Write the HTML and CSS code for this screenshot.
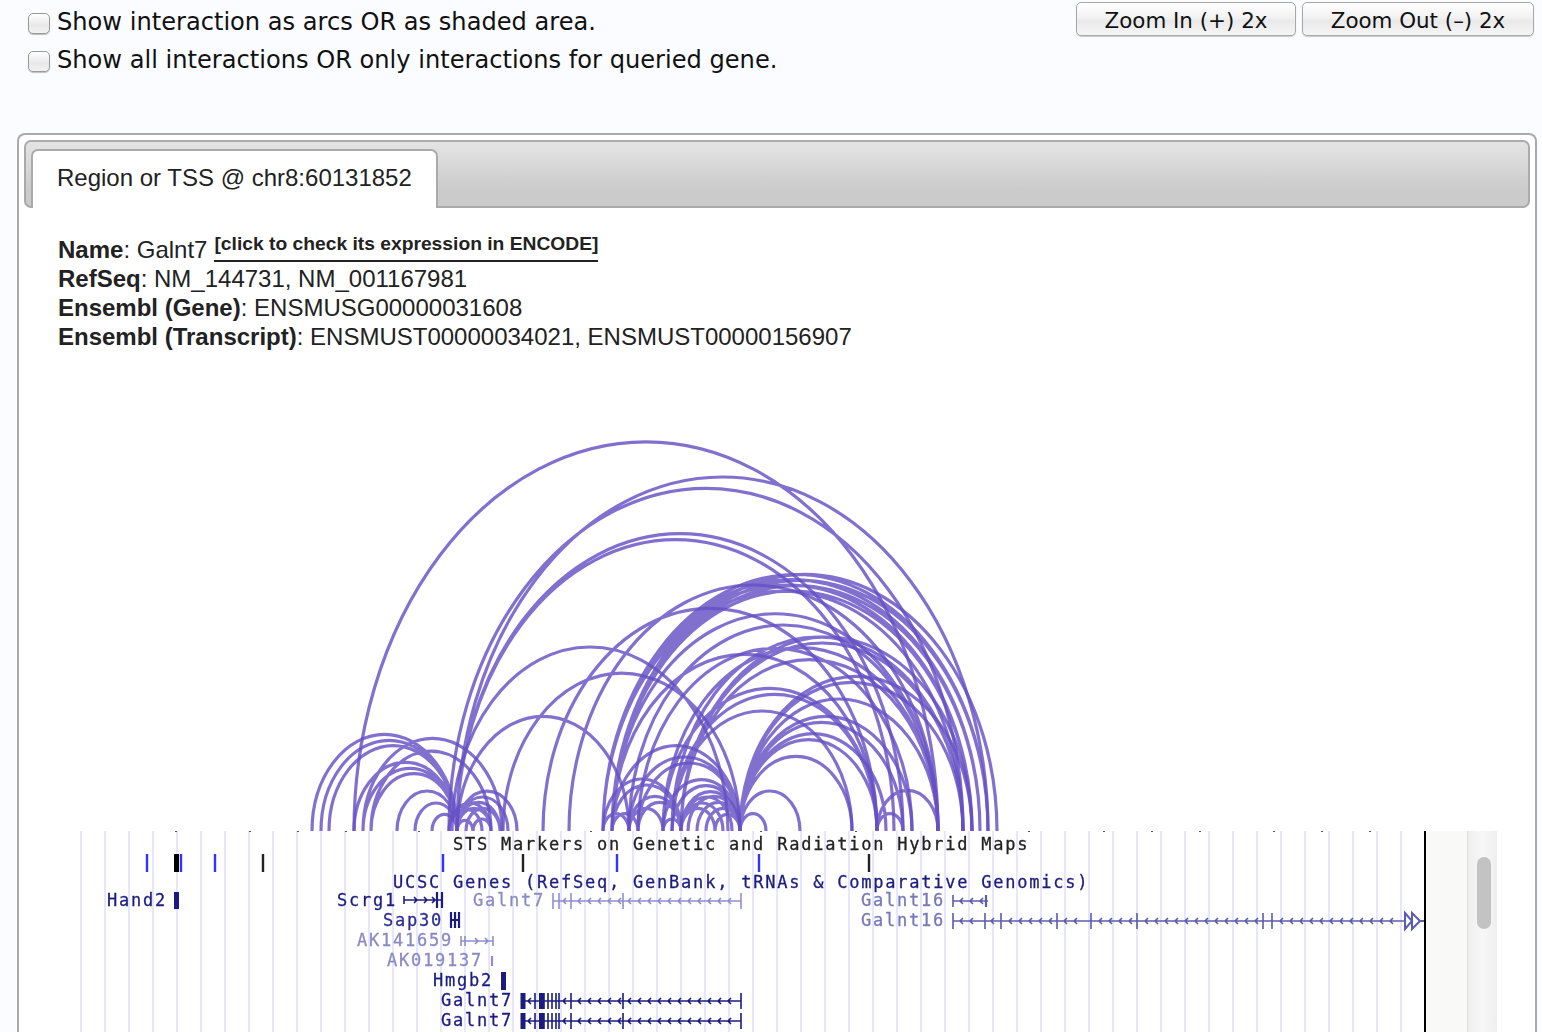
FILE: index.html
```html
<!DOCTYPE html>
<html lang="en">
<head>
<meta charset="utf-8">
<title>Region or TSS</title>
<link rel="stylesheet" href="styles.css">
</head>
<body>
<header class="controls">
  <div class="options">
    <label class="option"><input type="checkbox" class="check"><span>Show interaction as arcs OR as shaded area.</span></label>
    <label class="option"><input type="checkbox" class="check"><span>Show all interactions OR only interactions for queried gene.</span></label>
  </div>
  <div class="zooms">
    <button class="btn btn-in">Zoom In (+) 2x</button>
    <button class="btn btn-out">Zoom Out (–) 2x</button>
  </div>
</header>
<main class="panel">
  <div class="tabbar"><div class="tab">Region or TSS @ chr8:60131852</div></div>
  <section class="info">
    <div class="line line-name"><span><b>Name</b>: Galnt7</span><a class="encode">[click to check its expression in ENCODE]</a></div>
    <div class="line"><b>RefSeq</b>: NM_144731, NM_001167981</div>
    <div class="line"><b>Ensembl (Gene)</b>: ENSMUSG00000031608</div>
    <div class="line"><b>Ensembl (Transcript)</b>: ENSMUST00000034021, ENSMUST00000156907</div>
  </section>
  <svg class="arcs" viewBox="24 430 1000 401" width="1000" height="401">
    <g class="arc">
      <path d="M354 831A3 4 0 0 1 938 831M457 831A3 4 0 0 1 988 831M449 831A3 4 0 0 1 963 831M457 831A3 4 0 0 1 903 831M457 831A3 4 0 0 1 894 831"/>
      <path d="M312 831A3 4 0 0 1 457 831M321 831A3 4 0 0 1 457 831M329 831A3 4 0 0 1 457 831M363 831A3 4 0 0 1 502 831M371 831A3 4 0 0 1 491 831M354 831A3 4 0 0 1 457 831M363 831A3 4 0 0 1 457 831M371 831A3 4 0 0 1 457 831M397 831A3 4 0 0 1 457 831M415 831A3 4 0 0 1 457 831M432 831A3 4 0 0 1 457 831"/>
      <path d="M457 831A3 4 0 0 1 517 831M457 831A3 4 0 0 1 508 831M457 831A3 4 0 0 1 500 831M457 831A3 4 0 0 1 491 831M449 831A3 4 0 0 1 491 831M449 831A3 4 0 0 1 482 831M466 831A3 4 0 0 1 500 831M473 831A3 4 0 0 1 491 831M457 831A3 4 0 0 1 473 831"/>
      <path d="M452 831A3 4 0 0 1 728 831M503 831A3 4 0 0 1 740 831M457 831A3 4 0 0 1 629 831M543 831A3 4 0 0 1 877 831M569 831A3 4 0 0 1 938 831"/>
      <path d="M603 831A3 4 0 0 1 988 831M603 831A3 4 0 0 1 980 831M612 831A3 4 0 0 1 988 831M612 831A3 4 0 0 1 997 831M612 831A3 4 0 0 1 980 831M603 831A3 4 0 0 1 972 831M612 831A3 4 0 0 1 972 831M603 831A3 4 0 0 1 963 831M612 831A3 4 0 0 1 938 831M629 831A3 4 0 0 1 938 831M612 831A3 4 0 0 1 877 831"/>
      <path d="M740 831A3 4 0 0 1 852 831M740 831A3 4 0 0 1 877 831M740 831A3 4 0 0 1 886 831M740 831A3 4 0 0 1 903 831M740 831A3 4 0 0 1 912 831M740 831A3 4 0 0 1 938 831M740 831A3 4 0 0 1 963 831M740 831A3 4 0 0 1 972 831M740 831A3 4 0 0 1 766 831M740 831A3 4 0 0 1 800 831M877 831A3 4 0 0 1 938 831M877 831A3 4 0 0 1 903 831"/>
      <path d="M672 831A3 4 0 0 1 877 831M663 831A3 4 0 0 1 877 831M672 831A3 4 0 0 1 852 831M681 831A3 4 0 0 1 938 831M663 831A3 4 0 0 1 938 831M672 831A3 4 0 0 1 963 831M681 831A3 4 0 0 1 963 831M681 831A3 4 0 0 1 972 831M638 831A3 4 0 0 1 912 831"/>
      <path d="M603 831A3 4 0 0 1 681 831M612 831A3 4 0 0 1 681 831M629 831A3 4 0 0 1 681 831M638 831A3 4 0 0 1 681 831M663 831A3 4 0 0 1 681 831M603 831A3 4 0 0 1 629 831M612 831A3 4 0 0 1 638 831M629 831A3 4 0 0 1 663 831M612 831A3 4 0 0 1 740 831M629 831A3 4 0 0 1 740 831M638 831A3 4 0 0 1 740 831M663 831A3 4 0 0 1 740 831M672 831A3 4 0 0 1 740 831"/>
      <path d="M681 831A3 4 0 0 1 740 831M688 831A3 4 0 0 1 740 831M697 831A3 4 0 0 1 740 831M706 831A3 4 0 0 1 740 831M681 831A3 4 0 0 1 732 831M681 831A3 4 0 0 1 723 831M681 831A3 4 0 0 1 715 831M715 831A3 4 0 0 1 740 831"/>
    </g>
  </svg>
  <div class="browser">
    <svg class="tracks" viewBox="80 831 1344 201" width="1344" height="201">
      <g class="guides">
        <path d="M81 831V1032M105 831V1032M129 831V1032M153 831V1032M177 831V1032M201 831V1032M225 831V1032M249 831V1032M273 831V1032M297 831V1032M321 831V1032M345 831V1032M369 831V1032M393 831V1032M417 831V1032M441 831V1032M465 831V1032M489 831V1032M513 831V1032M537 831V1032M561 831V1032M585 831V1032M609 831V1032M633 831V1032M657 831V1032M681 831V1032M705 831V1032M729 831V1032M753 831V1032M777 831V1032M801 831V1032M825 831V1032M849 831V1032M873 831V1032M897 831V1032M921 831V1032M945 831V1032M969 831V1032M993 831V1032M1017 831V1032M1041 831V1032M1065 831V1032M1089 831V1032M1113 831V1032M1137 831V1032M1161 831V1032M1185 831V1032M1209 831V1032M1233 831V1032M1257 831V1032M1281 831V1032M1305 831V1032M1329 831V1032M1353 831V1032M1377 831V1032M1401 831V1032"/>
      </g>
      <path class="dots" d="M175 831h2M249 831h2M297 831h2M345 831h2M418 831h2M590 831h2M760 831h2M855 831h2M1028 831h2M1103 831h2M1151 831h2M1199 831h2M1273 831h2M1321 831h2M1369 831h2"/>
      <path class="sts-blue" d="M147 854V872M181 854V872M215 854V872M443 854V872M617 854V872M759 854V872"/>
      <path class="sts-black" d="M263 854V872M523 854V872M869 854V872"/>
      <path class="sts-thick" d="M176.500 854V872"/>
      <text class="label black" x="453" y="850">STS Markers on Genetic and Radiation Hybrid Maps</text>
      <text class="label navy" x="393" y="888">UCSC Genes (RefSeq, GenBank, tRNAs &amp; Comparative Genomics)</text>

      <text class="label navy" x="107" y="906">Hand2</text>
      <path class="exon navy-s" d="M176.500 892V909"/>
      <text class="label navy" x="337" y="906">Scrg1</text>
      <path class="track navy-s" d="M404 900H442M404 896V904M414 897l3 3l-3 3M424 897l3 3l-3 3M432 897l3 3l-3 3"/>
      <path class="exon-thin navy-s" d="M437 892V908M442 892V908"/>
      <text class="label pale" x="473" y="906">Galnt7</text>
      <path class="track pale-s" d="M553 901H741M553 893V909M559 893V909M571 893V909M623 893V909M741 893V909M566 898l-3 3l3 3M581 898l-3 3l3 3M591 898l-3 3l3 3M601 898l-3 3l3 3M611 898l-3 3l3 3M621 898l-3 3l3 3M631 898l-3 3l3 3M641 898l-3 3l3 3M651 898l-3 3l3 3M661 898l-3 3l3 3M671 898l-3 3l3 3M681 898l-3 3l3 3M691 898l-3 3l3 3M701 898l-3 3l3 3M711 898l-3 3l3 3M721 898l-3 3l3 3M731 898l-3 3l3 3"/>
      <text class="label mid" x="861" y="906">Galnt16</text>
      <path class="track mid-s" d="M953 901H988M953 895V907M963 898l-3 3l3 3M973 898l-3 3l3 3M983 898l-3 3l3 3"/>
      <path class="exon-thin mid-s" d="M986 895V907"/>

      <text class="label navy2" x="383" y="926">Sap30</text>
      <path class="exon-thin navy-s" d="M451 912V928M455 912V928M459 912V928M451 920H459"/>
      <text class="label mid" x="861" y="926">Galnt16</text>
      <path class="track mid-s" d="M953 921H1404M953 913V929M985 913V929M1001 913V929M1057 913V929M1091 913V929M1137 913V929M1263 913V929M1272 913V929M963 918l-3 3l3 3M973 918l-3 3l3 3M994 918l-3 3l3 3M1012 918l-3 3l3 3M1022 918l-3 3l3 3M1032 918l-3 3l3 3M1042 918l-3 3l3 3M1052 918l-3 3l3 3M1067 918l-3 3l3 3M1077 918l-3 3l3 3M1102 918l-3 3l3 3M1112 918l-3 3l3 3M1122 918l-3 3l3 3M1132 918l-3 3l3 3M1148 918l-3 3l3 3M1158 918l-3 3l3 3M1168 918l-3 3l3 3M1178 918l-3 3l3 3M1188 918l-3 3l3 3M1198 918l-3 3l3 3M1208 918l-3 3l3 3M1218 918l-3 3l3 3M1228 918l-3 3l3 3M1238 918l-3 3l3 3M1248 918l-3 3l3 3M1258 918l-3 3l3 3M1283 918l-3 3l3 3M1293 918l-3 3l3 3M1303 918l-3 3l3 3M1313 918l-3 3l3 3M1323 918l-3 3l3 3M1333 918l-3 3l3 3M1343 918l-3 3l3 3M1353 918l-3 3l3 3M1363 918l-3 3l3 3M1373 918l-3 3l3 3M1383 918l-3 3l3 3M1393 918l-3 3l3 3"/>
      <path class="tri mid-s" d="M1405 913l7 8l-7 8zM1412 913l8 8l-8 8zM1420 921h4"/>

      <text class="label pale" x="357" y="946">AK141659</text>
      <path class="track pale-s" d="M461 941H493M461 936V946M465 936V946M493 936V946M475 938l3 3l-3 3M485 938l3 3l-3 3"/>
      <text class="label pale" x="387" y="966">AK019137</text>
      <path class="exon-thin pale-s" d="M492 956V966"/>

      <text class="label navy" x="433" y="986">Hmgb2</text>
      <path class="exon navy-s" d="M503.500 972V990"/>

      <text class="label navy" x="441" y="1006">Galnt7</text>
      <path class="track navy-s" d="M521 1001H741M535 993V1009M540 993V1009M544 993V1009M548 993V1009M552 993V1009M556 993V1009M559 993V1009M571 993V1009M623 993V1009M741 993V1009M531 998l-3 3l3 3M566 998l-3 3l3 3M581 998l-3 3l3 3M591 998l-3 3l3 3M601 998l-3 3l3 3M611 998l-3 3l3 3M621 998l-3 3l3 3M631 998l-3 3l3 3M641 998l-3 3l3 3M651 998l-3 3l3 3M661 998l-3 3l3 3M671 998l-3 3l3 3M681 998l-3 3l3 3M691 998l-3 3l3 3M701 998l-3 3l3 3M711 998l-3 3l3 3M721 998l-3 3l3 3M731 998l-3 3l3 3"/>
      <path class="exon navy-s" d="M523 993V1009M541.500 993V1009"/>
      <text class="label navy" x="441" y="1026">Galnt7</text>
      <path class="track navy-s" d="M521 1021H741M535 1013V1029M540 1013V1029M544 1013V1029M548 1013V1029M552 1013V1029M556 1013V1029M559 1013V1029M571 1013V1029M623 1013V1029M741 1013V1029M531 1018l-3 3l3 3M566 1018l-3 3l3 3M581 1018l-3 3l3 3M591 1018l-3 3l3 3M601 1018l-3 3l3 3M611 1018l-3 3l3 3M621 1018l-3 3l3 3M631 1018l-3 3l3 3M641 1018l-3 3l3 3M651 1018l-3 3l3 3M661 1018l-3 3l3 3M671 1018l-3 3l3 3M681 1018l-3 3l3 3M691 1018l-3 3l3 3M701 1018l-3 3l3 3M711 1018l-3 3l3 3M721 1018l-3 3l3 3M731 1018l-3 3l3 3"/>
      <path class="exon navy-s" d="M523 1013V1029M541.500 1013V1029"/>
    </svg>
    <div class="gutter"></div>
    <div class="scrollbar"><div class="thumb"></div></div>
  </div>
</main>
</body>
</html>
```
FILE: styles.css
```css
html, body { margin: 0; padding: 0; height: 1032px; overflow: hidden; }
body { background: #fbfcff; color: #111; font-family: "Liberation Sans", Arial, sans-serif; }

.controls { display: flex; justify-content: space-between; height: 133px; padding: 2px 8px 0 28px; box-sizing: border-box; }
.options { display: flex; flex-direction: column; gap: 12px; padding-top: 7px; }
.option { display: flex; align-items: center; height: 26px; font-family: "DejaVu Sans", sans-serif; font-size: 24.12px; color: #111; gap: 7px; }
.check { appearance: none; -webkit-appearance: none; margin: 2px 0 0; width: 22px; height: 21px; box-sizing: border-box; border: 1px solid #999; border-radius: 5px; background: linear-gradient(#ffffff, #e8e8e8 60%, #f2f2f2); box-shadow: 0 1px 1px rgba(0,0,0,.25); }

.zooms { display: flex; gap: 6px; }
.btn { height: 34px; padding: 2px 0 0; box-sizing: border-box; border: 1px solid #a8a8a8; border-radius: 5px; background: linear-gradient(#ffffff, #f2f2f2 45%, #e9e9e9 55%, #f5f5f5); box-shadow: 0 1px 1px rgba(0,0,0,.2); font-family: "DejaVu Sans", sans-serif; font-size: 21.4px; color: #111; }
.btn-in { width: 220px; }
.btn-out { width: 232px; }

.panel { margin: 0 5px 0 17px; height: 899px; box-sizing: border-box; border: 2px solid #aaa; border-bottom: 0; border-radius: 8px 8px 0 0; padding: 5px 5px 0; background: #fff; }
.tabbar { height: 68px; box-sizing: border-box; border: 2px solid #aaa; border-radius: 7px; background: linear-gradient(#e4e4e4, #cbcbcb 75%); padding: 7px 0 0 5px; display: flex; }
.tab { height: 59px; box-sizing: border-box; border: 2px solid #aaa; border-bottom: 0; border-radius: 7px 7px 0 0; background: #fff; width: 407px; padding: 0 0 0 24px; line-height: 53px; font-size: 24px; color: #222; }

.info { padding: 27px 0 0 34px; height: 222px; box-sizing: border-box; font-size: 24px; color: #222; }
.line { line-height: 29px; height: 29px; white-space: nowrap; }
.line-name { display: flex; align-items: flex-start; gap: 7px; }
.encode { font-size: 19.25px; font-weight: bold; line-height: 24px; border-bottom: 2px solid #222; margin-top: -3px; padding-bottom: 4px; }

.arcs { display: block; }
.arc path { fill: none; stroke: #6650c4; stroke-width: 3.2; opacity: .82; }

.browser { display: flex; margin-left: 56px; width: 1417px; height: 201px; background: #fff; }
.tracks { display: block; flex: none; filter: blur(.45px); background: #fff; }
.gutter { width: 41px; flex: none; background: #f9f9f8; border-left: 2px solid #000; }
.scrollbar { width: 30px; flex: none; box-sizing: border-box; padding: 26px 6px 0 9px; border-left: 1px solid #ddd; background: linear-gradient(90deg, #eee, #f8f8f8 50%, #eee); }
.thumb { height: 72px; border-radius: 8px; background: #c3c3c3; }

.guides path { stroke: #e6e6ff; stroke-width: 2; fill: none; }
.dots { stroke: #555; stroke-width: 2; fill: none; }
.sts-blue { stroke: #3333ff; stroke-width: 2.4; fill: none; }
.sts-black { stroke: #222; stroke-width: 2.4; fill: none; }
.sts-thick { stroke: #000; stroke-width: 5; fill: none; }

.label { font-family: "DejaVu Sans Mono", monospace; font-size: 17px; letter-spacing: 1.77px; stroke-width: .3px; }
.black { fill: #222; stroke: #222; }
.navy { fill: #1c1c80; stroke: #1c1c80; }
.navy2 { fill: #2e2e90; stroke: #2e2e90; }
.mid { fill: #7878b8; stroke: #7878b8; }
.pale { fill: #8a8ac4; stroke: #8a8ac4; }
.track { fill: none; stroke-width: 1.6; }
.exon { fill: none; stroke-width: 5; }
.exon-thin { fill: none; stroke-width: 2.2; }
.tri { fill: none; stroke-width: 2; }
.navy-s { stroke: #1c1c80; }
.mid-s { stroke: #5c5cad; }
.pale-s { stroke: #8f8fd0; }
```
